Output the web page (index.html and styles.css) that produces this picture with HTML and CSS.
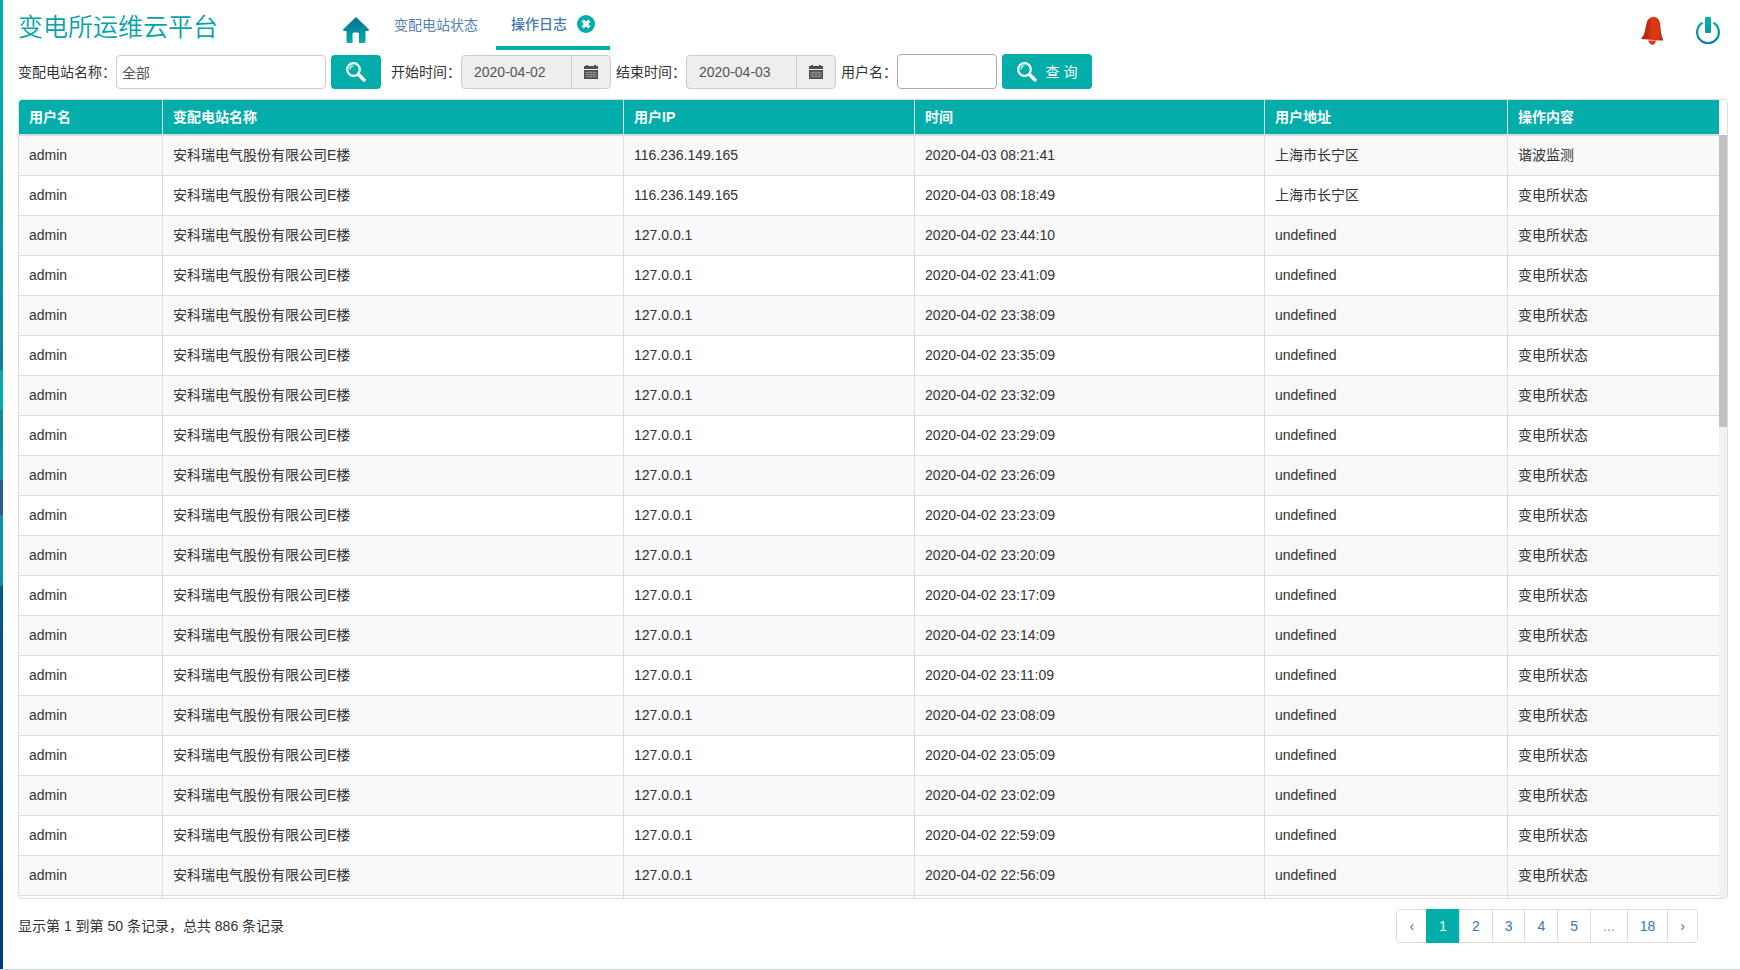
FILE: index.html
```
<!DOCTYPE html>
<html lang="zh-CN">
<head>
    <meta charset="UTF-8">
    <meta name="viewport" content="width=device-width, initial-scale=1.0">
    <title>操作日志 - 变电所运维云平台</title>
    <link rel="stylesheet" href="styles.css">
</head>
<body>

<div class="side-strip"></div>

<div class="page">
    <header class="topbar">
        <h1 class="brand">变电所运维云平台</h1>
        <nav class="tabs">
            <a href="#" class="home-link" aria-label="首页">
                <svg width="26" height="26" viewBox="0 0 26 26">
                    <defs>
                        <linearGradient id="homeFill" x1="0" y1="0" x2="0" y2="1">
                            <stop offset="0.2" stop-color="#037a98"/>
                            <stop offset="1" stop-color="#02adaa"/>
                        </linearGradient>
                    </defs>
                    <path fill="url(#homeFill)" d="M13 0L26 12.500Q26 14 24.500 14H22.500V24.500Q22.500 26 21 26H16V17Q16 15.500 14.500 15.500H11Q9.500 15.500 9.500 17V26H4.500Q3.500 26 3.500 25V14H1.500Q0 14 0 12.500Z"/>
                </svg>
            </a>
            <a href="#" class="tab">变配电站状态</a>
            <div class="tab active">
                <a href="#">操作日志</a>
                <button type="button" class="tab-close" aria-label="关闭">
                    <svg width="18" height="18" viewBox="0 0 18 18">
                        <circle cx="9" cy="9" r="9" fill="#02adaa"/>
                        <path d="M5.700 5.700L12.300 12.300M12.300 5.700L5.700 12.300" stroke="#fff" stroke-width="3.200"/>
                    </svg>
                </button>
            </div>
        </nav>
        <div class="top-actions">
            <button type="button" class="icon-btn" aria-label="报警">
                <svg width="22" height="28" viewBox="0 0 22 28">
                    <defs>
                        <linearGradient id="bellFill" x1="0" y1="0" x2="1" y2="0">
                            <stop offset="0" stop-color="#b32011"/>
                            <stop offset="0.35" stop-color="#c92a12"/>
                            <stop offset="0.5" stop-color="#e03a14"/>
                            <stop offset="0.8" stop-color="#d93615"/>
                            <stop offset="1" stop-color="#a51a10"/>
                        </linearGradient>
                    </defs>
                    <path d="M7 23.500H15Q14 28 11 28Q8 27 7 23.500Z" fill="#dc3c18"/>
                    <path d="M12.500 0C16.500 0 18.500 2.500 19 6.500C19.700 12 20 17 21 20L22 22.500V23.500H18L0.500 22V21C3 19 4 14 5 9C6 3 8 0 12.500 0Z" fill="url(#bellFill)"/>
                </svg>
            </button>
            <button type="button" class="icon-btn" aria-label="退出">
                <svg width="24" height="27" viewBox="0 0 24 27">
                    <defs>
                        <linearGradient id="powerFill" gradientUnits="userSpaceOnUse" x1="0" y1="0" x2="0" y2="27">
                            <stop offset="0" stop-color="#02b5aa"/>
                            <stop offset="1" stop-color="#05809d"/>
                        </linearGradient>
                    </defs>
                    <path d="M6.500 5.800A10.900 10.900 0 1 0 17.500 5.800" fill="none" stroke="url(#powerFill)" stroke-width="2.200"/>
                    <rect x="9" y="0" width="6" height="16" rx="1" fill="url(#powerFill)"/>
                </svg>
            </button>
        </div>
    </header>

    <form class="search-bar" onsubmit="return false">
        <label for="station">变配电站名称：</label>
        <input type="text" id="station" class="form-input station-input" value="全部">
        <button type="button" class="search-btn icon-only" aria-label="选择变配电站">
            <svg width="20" height="20" viewBox="0 0 20 20">
                <circle cx="7.500" cy="7.500" r="6.300" fill="none" stroke="#fff" stroke-width="2.200"/>
                <path d="M4 7.500A3.500 3.500 0 0 1 7.500 4" fill="none" stroke="#fff" stroke-width="1.200"/>
                <path d="M12.500 12.500L18 18" stroke="#fff" stroke-width="3.500" stroke-linecap="round"/>
            </svg>
        </button>

        <label for="startDate" class="start-label">开始时间：</label>
        <div class="date-group">
            <input type="text" id="startDate" value="2020-04-02" readonly>
            <button type="button" aria-label="选择开始时间">
                <svg width="14" height="14" viewBox="0 0 14 14">
                    <path fill="#505050" d="M0 1H2V0H4V1H10V0H12V1H14V4H0ZM0 5H14V14H0Z"/>
                    <path stroke="#aaa" stroke-width="0.600" d="M1 7.500H13M1 9.500H13M1 11.500H13M4 6V13M7 6V13M10 6V13"/>
                </svg>
            </button>
        </div>

        <label for="endDate">结束时间：</label>
        <div class="date-group">
            <input type="text" id="endDate" value="2020-04-03" readonly>
            <button type="button" aria-label="选择结束时间">
                <svg width="14" height="14" viewBox="0 0 14 14">
                    <path fill="#505050" d="M0 1H2V0H4V1H10V0H12V1H14V4H0ZM0 5H14V14H0Z"/>
                    <path stroke="#aaa" stroke-width="0.600" d="M1 7.500H13M1 9.500H13M1 11.500H13M4 6V13M7 6V13M10 6V13"/>
                </svg>
            </button>
        </div>

        <label for="username">用户名：</label>
        <input type="text" id="username" class="form-input user-input">
        <button type="submit" class="search-btn">
            <svg width="20" height="20" viewBox="0 0 20 20">
                <circle cx="7.500" cy="7.500" r="6.300" fill="none" stroke="#fff" stroke-width="2.200"/>
                <path d="M4 7.500A3.500 3.500 0 0 1 7.500 4" fill="none" stroke="#fff" stroke-width="1.200"/>
                <path d="M12.500 12.500L18 18" stroke="#fff" stroke-width="3.500" stroke-linecap="round"/>
            </svg>
            <span>查 询</span>
        </button>
    </form>

    <div class="table-box">
        <div class="table-view">
            <table id="logTable">
                <colgroup>
                    <col class="col-user">
                    <col class="col-station">
                    <col class="col-ip">
                    <col class="col-time">
                    <col class="col-address">
                    <col class="col-content">
                </colgroup>
                <thead>
                    <tr>
                        <th>用户名</th>
                        <th>变配电站名称</th>
                        <th>用户IP</th>
                        <th>时间</th>
                        <th>用户地址</th>
                        <th>操作内容</th>
                    </tr>
                </thead>
                <tbody></tbody>
            </table>
        </div>
        <div class="scroll-track"><div class="scroll-thumb"></div></div>
    </div>

    <footer class="table-footer">
        <div>显示第 1 到第 50 条记录，总共 886 条记录</div>
        <ul class="pagination">
            <li><a href="#">‹</a></li>
            <li class="active"><a href="#">1</a></li>
            <li><a href="#">2</a></li>
            <li><a href="#">3</a></li>
            <li><a href="#">4</a></li>
            <li><a href="#">5</a></li>
            <li class="disabled"><a href="#">...</a></li>
            <li><a href="#">18</a></li>
            <li><a href="#">›</a></li>
        </ul>
    </footer>
</div>

<script>
    const station = '安科瑞电气股份有限公司E楼';
    const logs = [
        ['116.236.149.165', '2020-04-03 08:21:41', '上海市长宁区', '谐波监测'],
        ['116.236.149.165', '2020-04-03 08:18:49', '上海市长宁区', '变电所状态']
    ];
    const localTimes = [
        '23:44:10', '23:41:09', '23:38:09', '23:35:09', '23:32:09', '23:29:09',
        '23:26:09', '23:23:09', '23:20:09', '23:17:09', '23:14:09', '23:11:09',
        '23:08:09', '23:05:09', '23:02:09', '22:59:09', '22:56:09'
    ];
    localTimes.forEach(time => {
        logs.push(['127.0.0.1', '2020-04-02 ' + time, 'undefined', '变电所状态']);
    });

    const tbody = document.querySelector('#logTable tbody');
    logs.forEach(log => {
        const row = document.createElement('tr');
        row.innerHTML = `
            <td>admin</td>
            <td>${station}</td>
            <td>${log[0]}</td>
            <td>${log[1]}</td>
            <td>${log[2]}</td>
            <td>${log[3]}</td>
        `;
        tbody.appendChild(row);
    });

    // empty row, only its top edge shows above the bottom border
    const lastRow = document.createElement('tr');
    lastRow.innerHTML = '<td></td>'.repeat(6);
    tbody.appendChild(lastRow);
</script>

</body>
</html>
```

FILE: styles.css
```
/* General styles */
* {
    box-sizing: border-box;
}

body {
    display: flex;
    min-height: 100vh;
    margin: 0;
    font-family: "Liberation Sans", "Noto Sans CJK SC", sans-serif;
    font-size: 14px;
    line-height: 20px;
    color: #333;
    background-color: #fff;
    border-bottom: 1px solid #ccd8dc;
}

a {
    color: #337ab7;
    text-decoration: none;
}

button {
    padding: 0;
    border: none;
    font: inherit;
    cursor: pointer;
}

svg {
    display: block;
}

.side-strip {
    flex: none;
    width: 3px;
    background: linear-gradient(#02adaa 0, #02adaa 80px, #03949f 240px, #0b829a 370px, #02adaa 370px, #02adaa 410px, #0b8a9c 410px, #0b929f 480px, #265f93 480px, #265f93 515px, #0b959f 515px, #0b8f9f 586px, #005b8a 586px, #003a7d 100%);
}

.page {
    flex: 1;
    display: flex;
    flex-direction: column;
    min-width: 0;
    padding: 0 12px 0 15px;
}

/* Top bar */
.topbar {
    display: flex;
    height: 54px;
}

.brand {
    width: 325px;
    margin: 0;
    padding-top: 10px;
    font-size: 25px;
    font-weight: 350;
    line-height: 34px;
    color: #05a3a8;
}

.tabs {
    display: flex;
    height: 50px;
}

.home-link {
    padding-top: 17px;
    margin-right: 7px;
}

.tab {
    display: flex;
    align-items: center;
    gap: 10px;
    padding: 0 16px;
    color: #5580b5;
    margin-left: 2px;
}

.tab.active {
    padding: 2px 15px 0;
    border-bottom: 4px solid #02adaa;
}

.tab.active a {
    color: #4478b5;
    font-weight: 500;
}

.tab-close {
    background: none;
}

.top-actions {
    display: flex;
    align-items: flex-start;
    gap: 33px;
    margin-left: auto;
    padding: 17px 8px 0 0;
}

.icon-btn {
    background: none;
}

/* Search form */
.search-bar {
    display: flex;
    align-items: center;
    height: 35px;
}

.form-input {
    height: 34px;
    padding: 0 5px;
    border: 1px solid #ccc;
    border-radius: 4px;
    font: inherit;
    color: #555;
}

.station-input {
    width: 210px;
}

.user-input {
    width: 100px;
    height: 35px;
    border-color: #aaa;
}

.search-btn {
    display: flex;
    align-items: center;
    justify-content: center;
    gap: 9px;
    width: 90px;
    height: 35px;
    margin-left: 5px;
    border-radius: 4px;
    color: #fff;
    background-color: #02adaa;
}

.search-btn.icon-only {
    width: 50px;
    height: 34px;
}

.search-bar .start-label {
    margin-left: 10px;
}

.date-group {
    display: flex;
    width: 150px;
    height: 34px;
    margin-right: 5px;
    border: 1px solid #ccc;
    border-radius: 4px;
    background-color: #eee;
}

.date-group input {
    flex: 1;
    min-width: 0;
    padding: 0 12px;
    border: none;
    border-right: 1px solid #ccc;
    font: inherit;
    color: #555;
    background: none;
}

.date-group button {
    display: flex;
    align-items: center;
    justify-content: center;
    width: 38px;
    background: none;
}

/* Log table */
.table-box {
    display: flex;
    height: calc(100vh - 170px);
    margin-top: 10px;
    border: 1px solid #ddd;
    border-radius: 4px;
    overflow: hidden;
}

.table-view {
    flex: 1;
    overflow: hidden;
}

#logTable {
    width: 100%;
    table-layout: fixed;
    border-collapse: separate;
    border-spacing: 0;
}

.col-user {
    width: 144px;
}

.col-station {
    width: 461px;
}

.col-ip {
    width: 291px;
}

.col-time {
    width: 350px;
}

.col-address {
    width: 243px;
}

.col-content {
    width: 212px;
}

#logTable th,
#logTable td {
    height: 40px;
    padding: 0 10px 2px;
    text-align: left;
    border-right: 1px solid #ddd;
    border-bottom: 1px solid #ddd;
}

#logTable th {
    height: 36px;
    padding-bottom: 0;
    color: #fff;
    background-color: #02adaa;
    border-bottom-width: 2px;
}

#logTable th:last-child,
#logTable td:last-child {
    border-right: none;
}

#logTable tbody tr:nth-child(odd) {
    background-color: #f9f9f9;
}

.scroll-track {
    width: 8px;
    margin-top: 35px;
    background-color: #f1f1f1;
}

.scroll-thumb {
    height: 292px;
    background-color: #c1c1c1;
}

/* Footer */
.table-footer {
    display: flex;
    justify-content: space-between;
    align-items: center;
    margin-top: 10px;
    padding-right: 30px;
}

.pagination {
    display: flex;
    margin: 0;
    padding: 0;
    list-style: none;
}

.pagination a {
    display: block;
    height: 34px;
    padding: 6px 12px;
    margin-left: -1px;
    border: 1px solid #ddd;
}

.pagination li:first-child a {
    border-radius: 4px 0 0 4px;
}

.pagination li:last-child a {
    border-radius: 0 4px 4px 0;
}

.pagination .active a {
    color: #fff;
    background-color: #02adaa;
    border-color: #02adaa;
}

.pagination .disabled a {
    color: #999;
}
```
